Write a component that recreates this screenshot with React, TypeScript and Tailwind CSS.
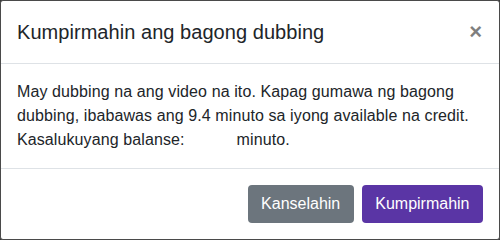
import React from "react";

export default function App() {
  return (
    <div className="w-[500px] h-[240px] bg-[#3a3a3a]" style={{ fontFamily: '"Liberation Sans", Arial, sans-serif' }}>
      <div className="w-[500px] h-[240px] bg-white border border-[#4a4a4a] rounded-[3px] flex flex-col text-[#212529]">
        <div className="flex items-start justify-between p-4 border-b border-[#dee2e6]">
          <h5 className="text-[20px] leading-[30px] font-medium tracking-[0.05px]">Kumpirmahin ang bagong dubbing</h5>
          <button className="text-[22px] leading-[30px] font-bold text-black opacity-50 mr-[1px]">×</button>
        </div>
        <div className="p-4 text-[16px] leading-[24px] tracking-[0.1px]">
          <p>May dubbing na ang video na ito. Kapag gumawa ng bagong</p>
          <p>dubbing, ibabawas ang 9.4 minuto sa iyong available na credit.</p>
          <p className="flex">
            <span>Kasalukuyang balanse:</span>
            <span className="ml-[52px]">minuto.</span>
          </p>
        </div>
        <div className="flex items-center justify-end px-3 py-3 border-t border-[#dee2e6] gap-2">
          <button className="h-[38px] px-[13.5px] rounded-[4px] bg-[#6c757d] text-white text-[16px] leading-[24px] my-1">Kanselahin</button>
          <button className="h-[38px] px-[13.5px] rounded-[4px] bg-[#5a35a5] text-white text-[16px] leading-[24px] my-1 mr-1">Kumpirmahin</button>
        </div>
      </div>
    </div>
  );
}
